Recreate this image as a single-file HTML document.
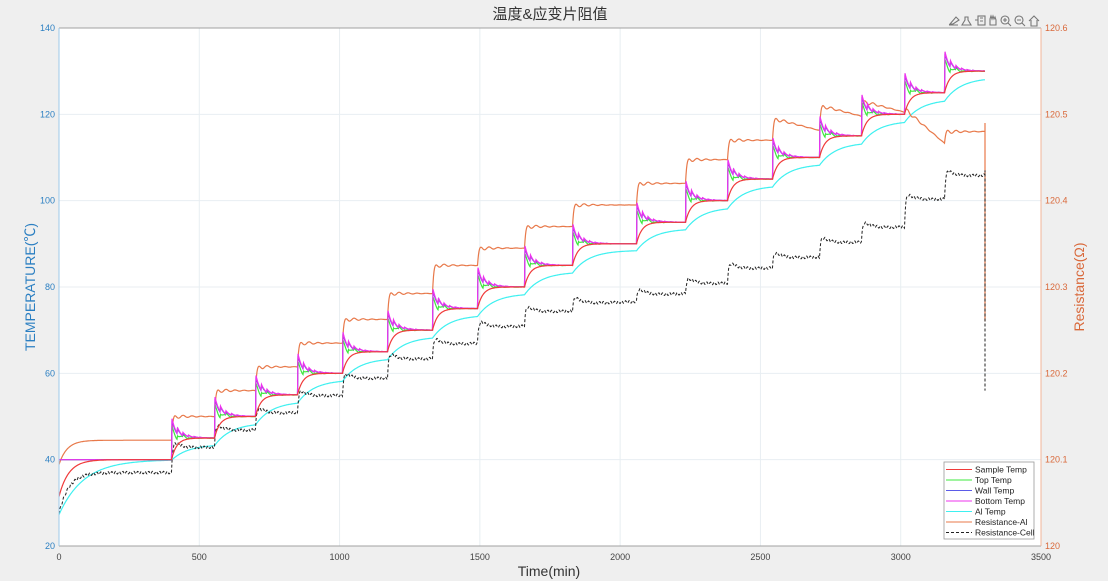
<!DOCTYPE html>
<html><head><meta charset="utf-8"><style>
html,body{margin:0;padding:0;background:#efefef;width:1108px;height:581px;overflow:hidden}
svg{display:block;font-family:"Liberation Sans","Noto Sans CJK SC",sans-serif}
</style></head><body>
<svg id="s" width="1108" height="581" xmlns="http://www.w3.org/2000/svg">
<rect x="59" y="28" width="982" height="518" fill="#fff"/>
<g id="grid" stroke="#e8eef2" stroke-width="1"></g>
<g id="data" fill="none" stroke-width="1.2"></g>
<line x1="59" y1="28" x2="1041" y2="28" stroke="#a0a0a0"/>
<line x1="59" y1="546" x2="1041" y2="546" stroke="#a0a0a0"/>
<line x1="59" y1="28" x2="59" y2="546" stroke="#9cc8ea"/>
<line x1="1041" y1="28" x2="1041" y2="546" stroke="#f0b49a"/>
<g id="ticks"></g>
<text x="550" y="19" font-size="15" text-anchor="middle" fill="#333">温度&amp;应变片阻值</text>
<text x="549" y="576" font-size="14" text-anchor="middle" fill="#333">Time(min)</text>
<text transform="translate(35,287) rotate(-90)" font-size="14" text-anchor="middle" fill="#2b7fc2">TEMPERATURE(℃)</text>
<text transform="translate(1084,287) rotate(-90)" font-size="14" text-anchor="middle" fill="#d9683a">Resistance(Ω)</text>
<g fill="none" stroke="#777" stroke-width="1.1">
<path d="M950 24 l6 -7 l3 3 l-6 4 z M949 25 h9"/>
<path d="M965 17 h3 v3 l3 5 h-9 l3 -5 z"/>
<rect x="978" y="16" width="7" height="9"/><path d="M975 20 h3 M980 18 h3 M980 21 h3"/>
<path d="M990 25 v-6 l1 -3 l1 3 l1 -3 l1 3 l1 -2 l1 3 v5 z"/>
<circle cx="1005" cy="20" r="4"/><path d="M1008 23 l3 3 M1003 20 h4 M1005 18 v4"/>
<circle cx="1019" cy="20" r="4"/><path d="M1022 23 l3 3 M1017 20 h4"/>
<path d="M1029 21 l5 -5 l5 5 M1031 20 v6 h6 v-6"/>
</g>
<rect x="944" y="462" width="90" height="77" fill="#fff" stroke="#999" stroke-width="0.8"/>
<g id="leg" font-size="8.5" fill="#222"></g>
</svg>
<script>
var NS="http://www.w3.org/2000/svg";
function el(p,n,a,t){var e=document.createElementNS(NS,n);for(var k in a)e.setAttribute(k,a[k]);if(t!=null)e.textContent=t;document.getElementById(p).appendChild(e);return e;}
var X0=59,X1=1041,Y0=28,Y1=546;
function X(t){return X0+t*(X1-X0)/3500}
function Y(T){return Y1-(T-20)*(Y1-Y0)/120}
for(var i=0;i<=7;i++){var x=X(i*500);if(i>0&&i<7)el("grid","line",{x1:x,y1:Y0,x2:x,y2:Y1});
el("ticks","text",{x:x,y:560,"font-size":9,"text-anchor":"middle",fill:"#444"},String(i*500));}
for(var i=0;i<=6;i++){var T=20+i*20,y=Y(T);if(i>0&&i<6)el("grid","line",{x1:X0,y1:y,x2:X1,y2:y});
el("ticks","text",{x:55,y:y+3,"font-size":9,"text-anchor":"end",fill:"#2b7fc2"},String(T));
el("ticks","text",{x:1045,y:y+3,"font-size":9,fill:"#d9683a"},(120+i*0.1).toFixed(i==0?0:1));}
var J=[172,215,256,298,343,388,433,478,525,573,637,686,728,773,820,862,905,945];
var END=985;
function seg(x){var k=-1;for(var i=0;i<J.length;i++)if(x>=J[i])k=i;return k;}
function setp(k){return 40+5*(k+1)}
var P={mag:[],blue:[],green:[],red:[],cyan:[],org:[],blk:[]};
var cyan=27,red=31,org=38.5,blk=27;
var O=[50,56,61.5,67,72.5,78.5,85,89,94,99,104,109.5,114,118,121,122,120,116];
var B=[44,48,52,56,60,64.5,68,72,75.5,77.5,79.5,82,85.5,88,91.5,95,101.5,107];
for(var x=59;x<=END;x+=0.5){
 var k=seg(x),S=setp(k),dx=k>=0?x-J[k]:x-59;
 if(k<0)S=40;
 var saw=(dx%5.5)/5.5;
 var sp=k>=0?(4.5*Math.exp(-dx/9)*(1-0.6*saw)):0;
 P.mag.push([x,S+sp]);P.blue.push([x,S+sp*0.9]);
 var gs=k>=0?1.5*Math.exp(-dx/12)*Math.pow(Math.sin(dx/3.5),2):0;
 P.green.push([x,S+sp*0.6-gs]);
 red+=(S-red)*(k<0?0.05:0.09); P.red.push([x,Math.min(red,S)]);
 var ct=S-(k>=0&&k<17?1.5:2.5);if(k<0)ct=40; cyan+=(ct-cyan)*(k<0?0.02:0.03); if(x>=945)cyan=Math.min(cyan+0.03,128); P.cyan.push([x,cyan]);
 var ot=k<0?44.5:O[k];
 if(k>=13&&k<16)ot=O[k]+1-0.06*dx;
 if(k==16)ot=O[k]+1-0.2*dx;
 org+=(ot-org)*(k<0?0.06:0.35); P.org.push([x,org+(k>=0?0.6*Math.sin(dx*0.7)*Math.exp(-dx/15):0)]);
 var bt=k<0?37:B[k]-1+2*Math.exp(-dx/8)-0.5+0.01*dx; blk+=(bt-blk)*(k<0?0.05:0.35); P.blk.push([x,blk+0.3*Math.sin(x*1.7)]);
}
P.org.push([END,118]);P.org.push([END,72]);P.org.push([END,90]);
P.blk.push([END,107]);P.blk.push([END,56]);
function draw(a,c,extra){var d="";a.forEach(function(p,i){d+=(i?"L":"M")+p[0].toFixed(1)+" "+Y(p[1]).toFixed(1)});var o={d:d,stroke:c};if(extra)for(var k in extra)o[k]=extra[k];el("data","path",o);}
draw(P.cyan,"#3ef0f0");draw(P.org,"#e8794a");draw(P.blk,"#222",{"stroke-dasharray":"3 2","stroke-width":1});
draw(P.green,"#3ee83e");draw(P.blue,"#5b4de0");draw(P.mag,"#ee33ee");draw(P.red,"#f03a3a");
var L=[["Sample Temp","#f03a3a"],["Top Temp","#3ee83e"],["Wall Temp","#5b5be8"],["Bottom Temp","#ee33ee"],["Al Temp","#3ef0f0"],["Resistance-Al","#e8794a"],["Resistance-Cell","#222"]];
L.forEach(function(l,i){var y=469.5+i*10.5;var o={x1:946,y1:y,x2:972,y2:y,stroke:l[1],"stroke-width":1};if(i==6)o["stroke-dasharray"]="3 2";el("leg","line",o);el("leg","text",{x:975,y:y+3},l[0]);});
</script>
</body></html>
